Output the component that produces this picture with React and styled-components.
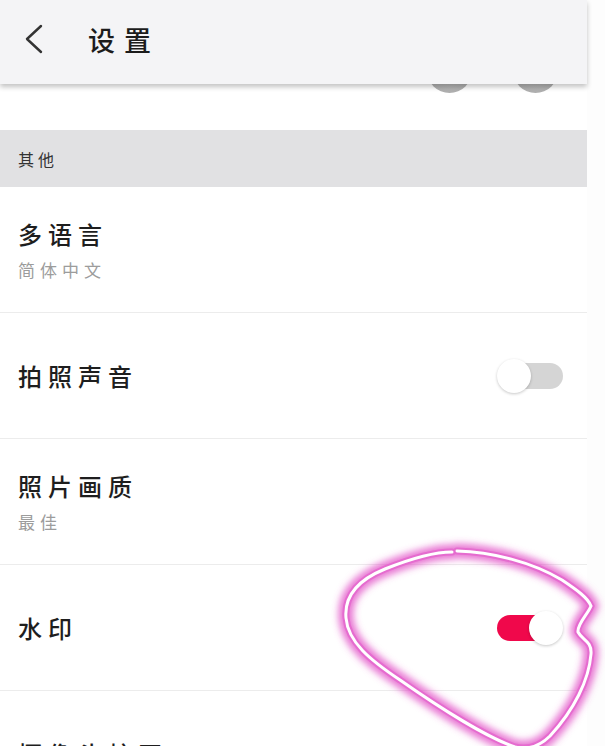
import React from 'react';
import styled, { createGlobalStyle } from 'styled-components';

const GlobalStyle = createGlobalStyle`
      html, body {
            margin: 0;
            padding: 0;
            background: #fdfdfd;
      }
      body {
            font-family: "Noto Sans CJK SC", "Noto Sans", sans-serif;
      }
`;

const Page = styled.div`
      position: relative;
      width: 605px;
      height: 746px;
      overflow: hidden;
      background: #fdfdfd;
`;
const Screen = styled.div`
      width: 587px;
      background: #fff;
      display: flex;
      flex-direction: column;
`;
const Header = styled.div`
      position: relative;
      z-index: 2;
      height: 84px;
      box-sizing: border-box;
      padding: 0 0 6px 24px;
      background: #f4f4f6;
      display: flex;
      align-items: center;
      gap: 44px;
      box-shadow: 0 3px 5px rgba(0, 0, 0, 0.24);
`;
const Title = styled.h1`
      margin: 0;
      font-size: 27px;
      font-weight: 500;
      letter-spacing: 9px;
      color: #1c1c1c;
`;
const Peek = styled.div`
      height: 46px;
      display: flex;
      justify-content: flex-end;
      gap: 41px;
      padding-right: 29px;
`;
const PeekDot = styled.span`
      width: 45px;
      height: 45px;
      margin-top: -36px;
      border-radius: 50%;
      background: radial-gradient(circle at 50% 40%, #c4c4c4, #a9a9a9);
`;
const Section = styled.div`
      height: 57px;
      flex-shrink: 0;
      background: #e1e1e3;
      display: flex;
      align-items: center;
      padding-left: 18px;
      font-size: 16px;
      letter-spacing: 4px;
      color: #333;
`;
const Row = styled.div`
      height: 126px;
      flex-shrink: 0;
      box-sizing: border-box;
      border-bottom: 1px solid #ececec;
      display: flex;
      align-items: center;
      justify-content: space-between;
      padding: 0 24px 0 18px;
`;
const Text = styled.div`
      display: flex;
      flex-direction: column;
      gap: 10px;
`;
const Label = styled.div`
      font-size: 24px;
      font-weight: 500;
      line-height: 30px;
      letter-spacing: 6px;
      color: #1e1e1e;
`;
const Sub = styled.div`
      font-size: 17px;
      line-height: 22px;
      letter-spacing: 5px;
      color: #9c9c9c;
`;
const Switch = styled.div`
      position: relative;
      width: 66px;
      height: 34px;
`;
const Track = styled.span`
      position: absolute;
      top: 4px;
      height: 26px;
      left: ${p => (p.$on ? '0' : '12px')};
      right: ${p => (p.$on ? '12px' : '0')};
      border-radius: 13px;
      background: ${p => (p.$on ? '#f0084b' : '#d5d5d5')};
`;
const Knob = styled.span`
      position: absolute;
      top: 0;
      ${p => (p.$on ? 'right: 0;' : 'left: 0;')}
      width: 34px;
      height: 34px;
      border-radius: 50%;
      background: #fff;
      box-shadow: 0 1px 3px rgba(0, 0, 0, 0.22);
`;
const Marker = styled.svg`
      position: absolute;
      top: 0;
      left: 0;
      pointer-events: none;
`;

const Toggle = ({ on }) => (
      <Switch>
            <Track $on={on} />
            <Knob $on={on} />
      </Switch>
);

const rows = [
      { label: '多语言', sub: '简体中文' },
      { label: '拍照声音', toggle: false },
      { label: '照片画质', sub: '最佳' },
      { label: '水印', toggle: true },
      { label: '摄像头校正' },
];

const loop = 'M 457 551 C 492 552, 532 562, 562 580 C 577 590, 588 598, 591 606 C 588 614, 577 624, 578 632 C 582 640, 592 641, 591 654 C 589 680, 574 710, 550 736 C 540 746, 528 750, 515 747 C 488 738, 440 708, 400 680 C 370 660, 348 642, 346 618 C 344 596, 358 580, 385 569 C 410 559, 432 552, 452 552';

const App = () => {
      return (
            <Page>
                  <GlobalStyle />
                  <Screen>
                        <Header>
                              <svg width="20" height="30" viewBox="0 0 20 30">
                                    <polyline points="17,2 3,15 17,28" fill="none" stroke="#333" strokeWidth="2.4" strokeLinecap="round" strokeLinejoin="round" />
                              </svg>
                              <Title>设置</Title>
                        </Header>
                        <Peek>
                              <PeekDot />
                              <PeekDot />
                        </Peek>
                        <Section>其他</Section>
                        {rows.map(r => (
                              <Row key={r.label}>
                                    <Text>
                                          <Label>{r.label}</Label>
                                          {r.sub && <Sub>{r.sub}</Sub>}
                                    </Text>
                                    {r.toggle !== undefined && <Toggle on={r.toggle} />}
                              </Row>
                        ))}
                  </Screen>
                  <Marker width="605" height="746" viewBox="0 0 605 746">
                        <defs>
                              <filter id="glow" x="-20%" y="-20%" width="140%" height="140%">
                                    <feGaussianBlur stdDeviation="3.5" />
                              </filter>
                        </defs>
                        <path d={loop} fill="none" stroke="#e04ac4" strokeWidth="15" strokeOpacity="0.75" filter="url(#glow)" strokeLinecap="round" />
                        <path d={loop} fill="none" stroke="#e56ccf" strokeWidth="7" strokeLinecap="round" />
                        <path d={loop} fill="none" stroke="#fff" strokeWidth="3" strokeLinecap="round" />
                  </Marker>
            </Page>
      );
};

export default App;
